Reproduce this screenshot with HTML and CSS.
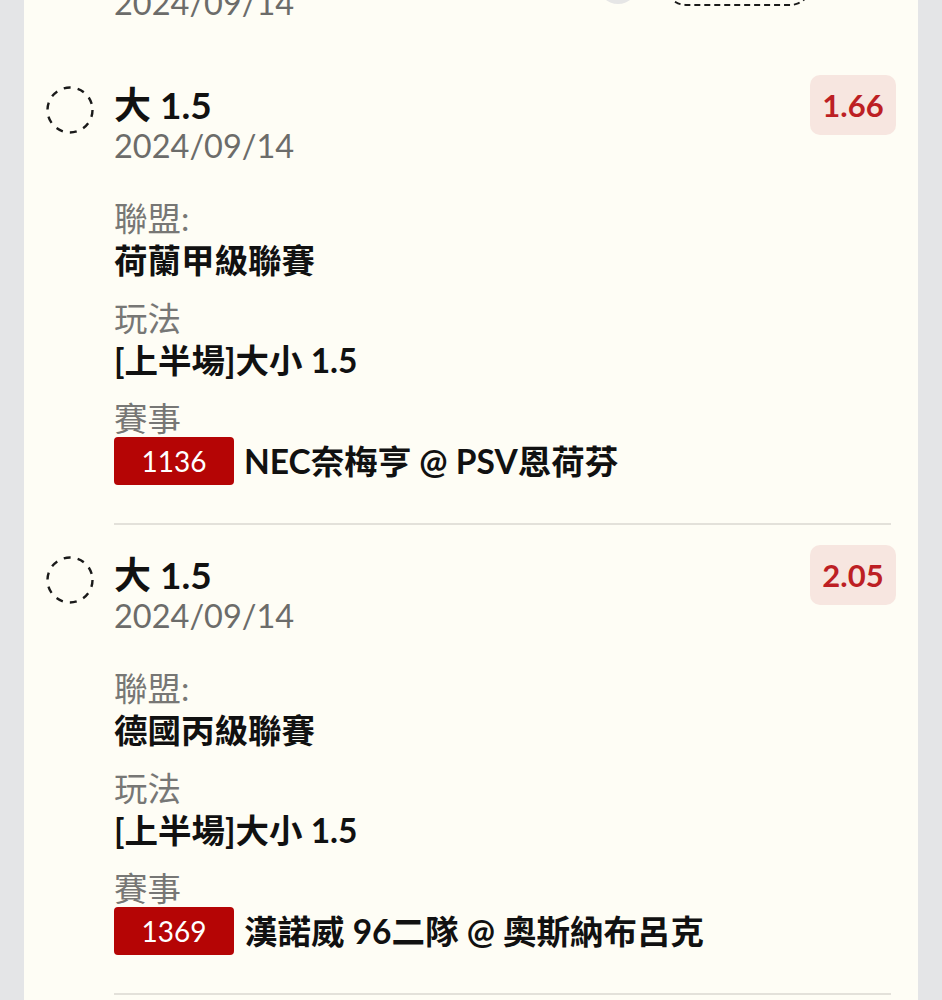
FILE: index.html
```html
<!DOCTYPE html>
<html lang="zh-Hant">
<head>
  <meta charset="UTF-8"/>
  <title>注單</title>
  <link rel="stylesheet" href="styles.css">
</head>
<body>
  <div class="page">
    <div class="card">

      <div class="head">
        <div class="head-text">
          <div class="title">大 1.5</div>
          <div class="date">2024/09/14</div>
        </div>
        <div class="head-tools">
          <span class="dot"></span>
          <span class="pill"></span>
        </div>
      </div>

      <div class="bet">
        <svg class="check" width="48" height="48" viewBox="0 0 48 48">
          <circle cx="24" cy="24" r="22.5" fill="none" stroke="#1a1a1a" stroke-width="2.4" stroke-dasharray="7 7.14"/>
        </svg>
        <div class="bet-body">
          <div class="title">大 1.5</div>
          <div class="date">2024/09/14</div>
          <div class="field">
            <div class="label">聯盟:</div>
            <div class="value">荷蘭甲級聯賽</div>
          </div>
          <div class="field">
            <div class="label">玩法</div>
            <div class="value">[上半場]大小 1.5</div>
          </div>
          <div class="field">
            <div class="label">賽事</div>
            <div class="match">
              <span class="tag">1136</span>
              <span class="value">NEC奈梅亨 @ PSV恩荷芬</span>
            </div>
          </div>
        </div>
        <div class="odds">1.66</div>
      </div>
      <hr class="sep">

      <div class="bet">
        <svg class="check" width="48" height="48" viewBox="0 0 48 48">
          <circle cx="24" cy="24" r="22.5" fill="none" stroke="#1a1a1a" stroke-width="2.4" stroke-dasharray="7 7.14"/>
        </svg>
        <div class="bet-body">
          <div class="title">大 1.5</div>
          <div class="date">2024/09/14</div>
          <div class="field">
            <div class="label">聯盟:</div>
            <div class="value">德國丙級聯賽</div>
          </div>
          <div class="field">
            <div class="label">玩法</div>
            <div class="value">[上半場]大小 1.5</div>
          </div>
          <div class="field">
            <div class="label">賽事</div>
            <div class="match">
              <span class="tag">1369</span>
              <span class="value">漢諾威 96二隊 @ 奧斯納布呂克</span>
            </div>
          </div>
        </div>
        <div class="odds">2.05</div>
      </div>
      <hr class="sep">

    </div>
  </div>
</body>
</html>
```

FILE: styles.css
```css
* { margin:0; padding:0; box-sizing:border-box }
body {
  font-family:"Lato","Noto Sans CJK TC",sans-serif;
  background:#e4e5e7; color:#111;
}
.page {
  height:100vh; overflow:hidden;
  padding:0 24px;
}
.card {
  background:#fefdf5;
  margin-top:-78px;
  padding:20px 22px 0;
  min-height:1200px;
}

/* header (scrolled out of view) */
.head {
  display:flex; justify-content:space-between;
  padding:0 0 31px 68px;
}
.head-tools {
  display:flex; align-items:center; gap:26px;
  margin:20px 84px 0 0; align-self:flex-start;
}
.dot {
  width:40px; height:40px; border-radius:50%;
  background:#e6e6e6;
}
.pill {
  width:148px; height:44px; border-radius:22px;
  border:2px dashed #1a1a1a;
}

/* bet rows */
.bet {
  display:flex; align-items:flex-start;
  padding-top:20px;
}
.check { flex:none; margin-top:11px }
.bet-body { flex:1; margin:10px 0 0 20px }
.title {
  font-size:37px; font-weight:bold; line-height:40px;
}
.date {
  font-size:32.5px; line-height:42px; color:#6c6c6a;
}
.bet-body .date { margin-bottom:30px }
.field + .field { margin-top:16px }
.label {
  font-size:33.5px; line-height:42px; color:#777775;
}
.value {
  font-size:33.5px; line-height:42px; font-weight:bold;
}
.match {
  display:flex; align-items:center; gap:10px;
  margin-top:-2px;
}
.tag {
  width:120px; height:48px; border-radius:4px;
  background:#b50505; color:#fff;
  font-size:28px; line-height:48px; text-align:center;
}
.odds {
  flex:none; width:86px; height:60px; border-radius:10px;
  background:#f7e6e0; color:#bd1f24;
  font-size:31px; font-weight:bold;
  display:flex; align-items:center; justify-content:center;
}
.sep {
  border:none; height:2px; background:#e3e1da;
  margin:38px 5px 0 68px;
}
```
